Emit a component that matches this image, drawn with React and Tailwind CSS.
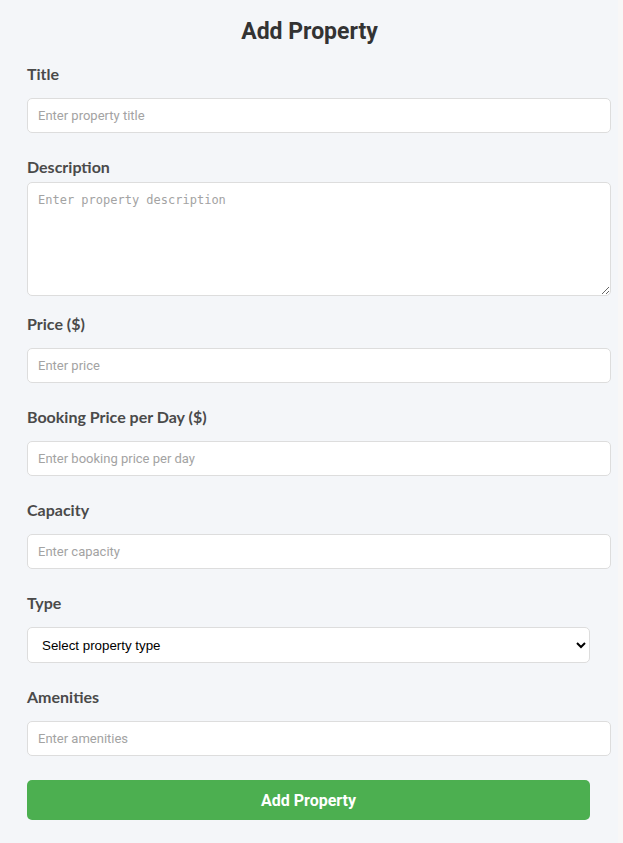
import React, { useState } from 'react';

const fields = [
  { name: 'title', label: 'Title', placeholder: 'Enter property title' },
  { name: 'description', label: 'Description', placeholder: 'Enter property description', textarea: true },
  { name: 'price', label: 'Price ($)', placeholder: 'Enter price' },
  { name: 'bookingPrice', label: 'Booking Price per Day ($)', placeholder: 'Enter booking price per day' },
  { name: 'capacity', label: 'Capacity', placeholder: 'Enter capacity' },
  { name: 'type', label: 'Type', select: true },
  { name: 'amenities', label: 'Amenities', placeholder: 'Enter amenities' }
];

const inputClass =
  "block w-[584px] h-[35px] px-[10px] bg-white border border-[#dddddd] rounded-[5px] text-[13px] text-[#333] placeholder:text-[#a3a3a3] outline-none font-['Roboto',sans-serif]";

const App = () => {
  const [form, setForm] = useState({});

  const handleChange = (field, value) => {
    setForm(prev => ({ ...prev, [field]: value }));
  };

  return (
    <div className="min-h-[843px] w-full bg-[#f8f7f7]">
      <div className="w-[618px] min-h-[843px] bg-[#f4f6f9] pl-[27px] pt-[17px] pb-[20px]">
        <h2 className="w-[565px] text-center text-[23px] leading-[30px] font-bold text-[#333] mb-[17px] font-['Roboto',sans-serif]">
          Add Property
        </h2>

        <form onSubmit={e => e.preventDefault()}>
          {fields.map(f => (
            <div key={f.name} className={f.textarea ? 'mb-[18px]' : 'mb-[24px]'}>
              <label className={`block text-[16px] leading-[20px] font-bold text-[#4a4a4a] font-['Lato',sans-serif] ${f.textarea ? 'mb-[5px]' : 'mb-[14px]'}`}>
                {f.label}
              </label>
              {f.textarea ? (
                <textarea
                  value={form[f.name] || ''}
                  onChange={e => handleChange(f.name, e.target.value)}
                  placeholder={f.placeholder}
                  className="block w-[584px] h-[114px] px-[10px] py-[9px] bg-white border border-[#dddddd] rounded-[5px] text-[12px] leading-[16px] text-[#333] placeholder:text-[#a3a3a3] outline-none font-['DejaVu_Sans_Mono',monospace]"
                />
              ) : f.select ? (
                <select
                  value={form[f.name] || ''}
                  onChange={e => handleChange(f.name, e.target.value)}
                  className="block w-[563px] h-[36px] px-[10px] bg-white border border-[#dddddd] rounded-[5px] text-[13.33px] text-black outline-none font-['Liberation_Sans',Arial,sans-serif]"
                >
                  <option value="">Select property type</option>
                  <option value="apartment">Apartment</option>
                  <option value="house">House</option>
                  <option value="villa">Villa</option>
                </select>
              ) : (
                <input
                  type="text"
                  value={form[f.name] || ''}
                  onChange={e => handleChange(f.name, e.target.value)}
                  placeholder={f.placeholder}
                  className={inputClass}
                />
              )}
            </div>
          ))}

          <button
            type="submit"
            className="block w-[563px] h-[40px] mt-[1px] bg-[#4caf50] text-white text-[16px] leading-[42px] font-bold rounded-[5px] font-['Roboto',sans-serif]"
          >
            Add Property
          </button>
        </form>
      </div>
    </div>
  );
};

export default App;
